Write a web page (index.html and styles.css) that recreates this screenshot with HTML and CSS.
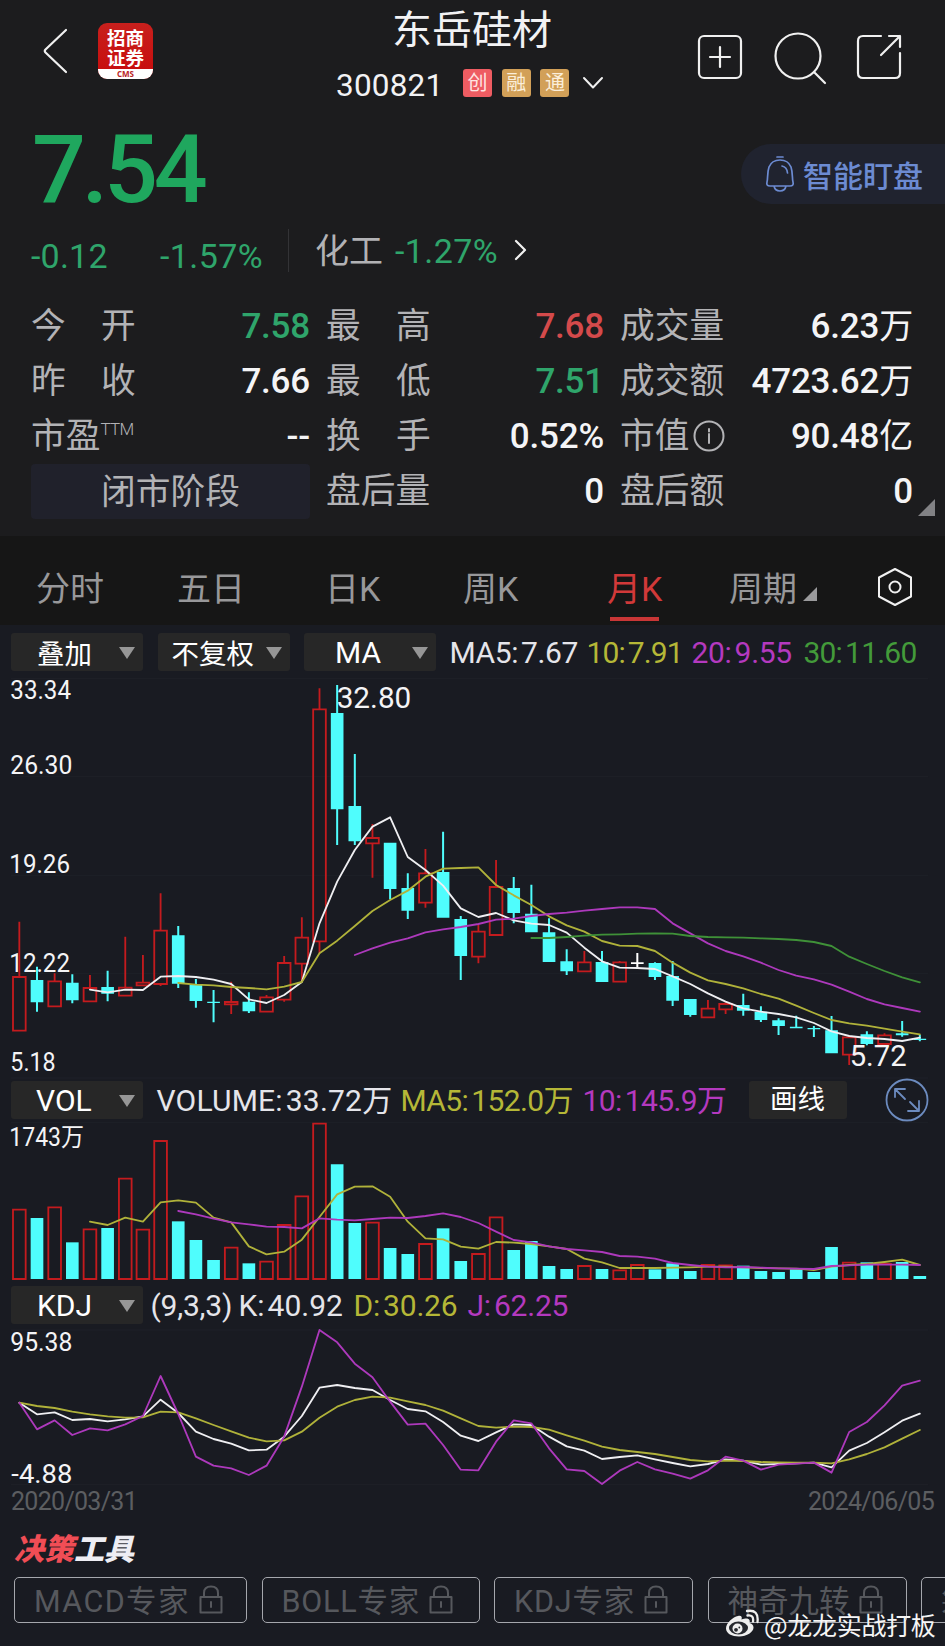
FILE: index.html
```html
<!DOCTYPE html>
<html lang="zh-CN">
<head>
<meta charset="utf-8">
<title>东岳硅材 300821</title>
<link rel="stylesheet" href="styles.css">
</head>
<body>
<main class="app">
  <header class="top">
    <svg class="back" viewBox="0 0 26 48"><path d="M23 3 2.500 22.500Q1 24 2.500 25.500L23 45"/></svg>
    <div class="logo"><div class="logo-name"><span>招商</span><span>证券</span></div><div class="logo-cms">CMS</div></div>
    <div class="title">
      <h1 class="name">东岳硅材</h1>
      <div class="code-row">
        <span class="code">300821</span>
        <span class="badge badge-red">创</span><span class="badge">融</span><span class="badge">通</span>
        <svg class="chev-down" viewBox="0 0 22 14"><path d="M2 2 11 11.500 20 2"/></svg>
      </div>
    </div>
    <div class="actions">
      <svg viewBox="0 0 46 46"><rect x="2" y="2" width="42" height="42" rx="5"/><path d="M23 13v20M13 23h20"/></svg>
      <svg class="search" viewBox="0 0 54 54"><circle cx="25" cy="25" r="22.500"/><path d="M41 41 52 52"/></svg>
      <svg viewBox="0 0 46 46"><path d="M25 2H7Q2 2 2 7V39Q2 44 7 44H39Q44 44 44 39V19M33 2H44V13M44 2 25 21"/></svg>
    </div>
  </header>

  <section class="price-area">
    <div class="price">7.54</div>
    <a class="watch"><svg viewBox="0 0 30 38"><path d="M12 2h6M2 27C3 24 2 18 4 12 6 7 10 5 15 5S24 7 26 12C28 18 27 24 28 27Q29 31 25 31H5Q1 31 2 27ZM9 31Q10 36 15 36T21 31M17 11Q22 12 22.500 18"/></svg><span>智能盯盘</span></a>
  </section>
  <section class="change">
    <span class="delta">-0.12</span><span class="pct">-1.57%</span>
    <i class="divider"></i>
    <span class="sector">化工</span><span class="sector-pct">-1.27%</span>
    <svg class="chev-right" viewBox="0 0 13 22"><path d="M2 2 11 11 2 20"/></svg>
  </section>

  <section class="quotes">
    <div class="q"><span class="wide">今开</span><b class="green">7.58</b></div>
    <div class="q"><span class="wide">最高</span><b class="red">7.68</b></div>
    <div class="q"><span>成交量</span><b>6.23<i>万</i></b></div>
    <div class="q"><span class="wide">昨收</span><b>7.66</b></div>
    <div class="q"><span class="wide">最低</span><b class="green">7.51</b></div>
    <div class="q"><span>成交额</span><b>4723.62<i>万</i></b></div>
    <div class="q"><span>市盈<sup>TTM</sup></span><b>--</b></div>
    <div class="q"><span class="wide">换手</span><b>0.52%</b></div>
    <div class="q"><span>市值</span><svg class="info" viewBox="0 0 32 32"><circle cx="16" cy="16" r="14.500"/><path d="M16 14v9M16 9v2.500"/></svg><b>90.48<i>亿</i></b></div>
    <div class="phase">闭市阶段</div>
    <div class="q"><span>盘后量</span><b>0</b></div>
    <div class="q"><span>盘后额</span><b>0</b><i class="corner"></i></div>
  </section>

  <nav class="tabs">
    <a>分时</a><a>五日</a><a>日K</a><a>周K</a><a class="active">月K</a><a class="period">周期<i></i></a>
    <svg viewBox="0 0 36 40"><path d="M18 2 34 10.500V29.500L18 38 2 29.500V10.500Z"/><circle cx="18" cy="20" r="5.500"/></svg>
  </nav>

  <section class="charts">
    <div class="bar bar-ma">
      <span class="sel sel-cjk">叠加<i></i></span><span class="sel sel-cjk tight">不复权<i></i></span><span class="sel">MA<i></i></span>
      <div class="legend l-ma"><span class="w">MA5:<em>7.67</em></span><span class="y">10:<em>7.91</em></span><span class="p">20:<em>9.55</em></span><span class="g">30:<em>11.60</em></span></div>
    </div>
    <svg class="plot plot-k" id="candles" viewBox="0 165 2835 1215"></svg>
    <div class="bar bar-vol">
      <span class="sel">VOL<i></i></span>
      <div class="legend l-vol"><span class="w">VOLUME:<em>33.72万</em></span><span class="y">MA5:<em>152.0万</em></span><span class="p">10:<em>145.9万</em></span></div>
      <span class="draw">画线</span>
      <svg class="expand" viewBox="0 0 44 44"><circle cx="22" cy="22" r="20.500"/><path d="M10 19V11H20M10 11 20 21M25 24 33 32M23 33H34V23"/></svg>
    </div>
    <svg class="plot plot-s" id="volume" viewBox="0 150 2835 486"></svg>
    <div class="bar bar-kdj">
      <span class="sel">KDJ<i></i></span>
      <div class="legend l-kdj"><span class="w">(9,3,3)</span><span class="w">K:<em>40.92</em></span><span class="y">D:<em>30.26</em></span><span class="p">J:<em>62.25</em></span></div>
    </div>
    <svg class="plot plot-s" id="kdj" viewBox="0 108 2835 486"></svg>
    <div class="dates"><span>2020/03/31</span><span>2024/06/05</span></div>
  </section>

  <section class="tools">
    <h2><span>决策</span>工具</h2>
    <div class="tool-row">
      <a class="t1"><span>MACD专家</span><svg viewBox="0 0 24 29"><path d="M1.500 12H22.500V27.500H1.500ZM5 12V8Q5 1.500 12 1.500T19 8V12M12 17v5"/></svg></a>
      <a class="t2"><span>BOLL专家</span><svg viewBox="0 0 24 29"><path d="M1.500 12H22.500V27.500H1.500ZM5 12V8Q5 1.500 12 1.500T19 8V12M12 17v5"/></svg></a>
      <a class="t3"><span>KDJ专家</span><svg viewBox="0 0 24 29"><path d="M1.500 12H22.500V27.500H1.500ZM5 12V8Q5 1.500 12 1.500T19 8V12M12 17v5"/></svg></a>
      <a class="t4"><span>神奇九转</span><svg viewBox="0 0 24 29"><path d="M1.500 12H22.500V27.500H1.500ZM5 12V8Q5 1.500 12 1.500T19 8V12M12 17v5"/></svg></a>
      <a class="t5"><span>筹</span></a>
    </div>
  </section>

  <div class="watermark">
    <svg viewBox="0 0 34 28"><path class="fill" d="M13 7C8 8 1 14 1 19.500 1 24.500 7 27.500 14 27.500 22 27.500 28.500 23 28.500 18.500 28.500 16 26.500 14.500 24.500 14 25.500 11 24 8 16.500 10.500 17.500 7.500 16 6.300 13 7Z"/><ellipse class="hole" cx="13.500" cy="19" rx="9.500" ry="6.500"/><circle class="fill" cx="12.500" cy="19.500" r="5"/><circle class="hole" cx="11" cy="20.800" r="1.900"/><circle class="hole" cx="14.300" cy="18.500" r=".9"/><path class="line" d="M22.500 6.500Q29 5.500 28 12.500M22 2Q34 0 32.500 13"/></svg>
    <span>@龙龙实战打板</span>
  </div>
</main>
<script src="charts.js"></script>
</body>
</html>
```
FILE: styles.css
```css
* { box-sizing: border-box; }
body { margin: 0; background: #191b22; font-family: Roboto, "Noto Sans CJK SC", sans-serif; color: #f2f2f4; }
i, em { font-style: normal; }
h1, h2 { margin: 0; font-weight: 400; }
svg { display: block; fill: none; stroke: #f0f0f0; stroke-linecap: round; stroke-linejoin: round; flex: none; }
.app { position: relative; width: 945px; height: 1646px; overflow: hidden; background: #1c1c1e; }

.top { display: flex; height: 118px; padding-left: 43px; }
.back { width: 26px; height: 48px; margin-top: 27px; stroke-width: 2.2; }
.logo { width: 55px; height: 56px; margin: 23px 0 0 29px; border-radius: 9px; background: linear-gradient(#c8201d, #c70b0b); overflow: hidden; text-align: center; }
.logo-name { display: flex; flex-direction: column; height: 46px; padding-top: 4px; font: 700 18.500px/20px "Noto Sans CJK SC", sans-serif; color: #fff; }
.logo-cms { height: 10px; background: #fff; color: #b92326; font: 700 8px/9px "Open Sans", sans-serif; }
.title { width: 300px; margin-left: 169px; }
.name { margin-top: 2px; padding-left: 70px; font-size: 40px; line-height: 57px; white-space: nowrap; }
.code-row { display: flex; align-items: center; height: 30px; margin-top: 9px; padding-left: 14px; }
.code { width: 127px; font-size: 31.5px; letter-spacing: .2px; padding-top: 5px; }
.badge { width: 29px; height: 28px; margin-right: 9.700px; border-radius: 3px; background: #d2a058; color: #fbeed9; font-size: 20px; line-height: 29px; text-align: center; }
.badge-red { background: #ee5c62; color: #ffe4e2; }
.chev-down { width: 22px; height: 14px; margin-left: 3px; stroke-width: 2; }
.actions { display: flex; align-items: flex-start; margin: 34px 0 0 75px; }
.actions svg { width: 46px; height: 46px; stroke-width: 2.200; }
.actions .search { width: 54px; height: 54px; margin: -3px 29px 0 30px; }

.price-area { display: flex; justify-content: space-between; height: 104px; padding-left: 32px; }
.price { padding-top: 2px; font-size: 95px; line-height: 100px; font-weight: 500; letter-spacing: -4.200px; color: #1fa75e; }
.watch { display: flex; align-items: center; width: 204px; height: 60px; margin-top: 26px; padding-left: 24px; border-radius: 30px 0 0 30px; background: #20232f; color: #6c8bd2; font-size: 30px; font-weight: 500; }
.watch svg { width: 30px; height: 38px; margin-right: 8px; stroke: #6c8bd2; stroke-width: 1.700; }

.change { display: flex; align-items: center; height: 56px; padding-left: 31px; font-size: 34px; line-height: 44px; color: #2fa56b; }
.delta { width: 129px; padding-top: 11px; letter-spacing: .2px; }
.pct { width: 128px; padding-top: 11px; letter-spacing: .4px; }
.divider { width: 1px; height: 43px; background: #333336; }
.sector { width: 105px; padding-left: 26px; color: #b2b2b5; font-size: 34px; padding-top: 2px; }
.sector-pct { width: 120px; padding-left: 1px; padding-top: 2px; letter-spacing: .4px; }
.chev-right { width: 13px; height: 22px; stroke-width: 2.200; }

.quotes { display: grid; grid-template-columns: 279px 278px 293px; column-gap: 16px; grid-auto-rows: 55.200px; height: 258px; padding: 20px 0 0 31px; font-size: 34.700px; color: #b3b3b6; }
.q { position: relative; display: flex; align-items: center; line-height: 50px; white-space: nowrap; }
.q .wide { letter-spacing: 35.300px; margin-right: -35px; }
.q b { margin-left: auto; padding-top: 2px; font-size: 35px; font-weight: 500; letter-spacing: -.2px; color: #f4f4f6; }
.q b i { font-size: 34px; font-weight: 400; }
.q .green { color: #2fa56b; }
.q .red { color: #d44a4b; }
.q sup { font-size: 17px; line-height: 10px; vertical-align: 13px; font-weight: 300; letter-spacing: -.7px; }
.info { width: 32px; height: 32px; margin-left: 4px; stroke: #b3b3b6; stroke-width: 2; }
.phase { height: 55px; border-radius: 4px; background: #20212b; text-align: center; line-height: 57px; }
.corner { position: absolute; right: -22px; top: 35px; border-left: 17px solid transparent; border-bottom: 17px solid #828285; }

.tabs { display: flex; align-items: center; height: 89px; padding: 16px 0 0 36px; background: #161616; color: #98989a; font-size: 34px; line-height: 60px; }
.tabs a { width: 144px; white-space: nowrap; }
.tabs a:first-child { width: 141px; }
.tabs a:nth-child(2) { width: 148px; }
.tabs a:nth-child(3) { width: 138px; }
.tabs a:nth-child(4) { width: 144px; }
.tabs a.active { position: relative; width: 122px; color: #d13939; }
.active::after { content: ""; position: absolute; left: 3px; bottom: -2px; width: 49px; height: 4px; background: #c93636; }
.tabs a.period { width: 148px; }
.period i { display: inline-block; margin-left: 6px; border-left: 14px solid transparent; border-bottom: 14px solid #9a9a9c; }
.tabs svg { width: 36px; height: 40px; stroke-width: 2; margin-top: -4px; }

.charts { height: 891px; background: #191b22; padding-top: 7px; }
.bar { display: flex; align-items: center; height: 39px; padding-left: 11px; }
.sel { display: flex; align-items: center; position: relative; width: 132px; height: 38px; margin-right: 14.500px; padding: 2px 0 0 25px; border-radius: 3px; background: #272727; color: #fff; font-size: 30px; }
.sel-cjk { font-size: 27.500px; padding-top: 0; padding-left: 26px; }
.tight { padding-left: 14px; }
.sel:nth-child(3) { padding-left: 31px; }
.sel i { position: absolute; right: 8px; top: 14px; border: 8px solid transparent; border-top: 12px solid #969696; border-bottom: 0; }
.legend { display: flex; font-size: 30px; line-height: 40px; padding-top: 3px; white-space: nowrap; }
.legend em { margin-left: 3px; }
.w { color: #e5e5ea; } .y { color: #b5b737; } .p { color: #b439bf; } .g { color: #439a3a; }
.l-ma { letter-spacing: -.8px; margin-left: -1px; }
.l-ma span:nth-child(1) { width: 137px; letter-spacing: -.4px; }
.l-ma span:nth-child(2) { width: 105px; letter-spacing: -.9px; }
.l-ma span:nth-child(3) { width: 112px; letter-spacing: -.3px; }
.l-vol span:nth-child(1) { width: 244px; letter-spacing: .2px; }
.l-vol span:nth-child(2) { width: 182px; letter-spacing: -.6px; }
.l-vol span:nth-child(3) { width: 166px; letter-spacing: -.6px; }
.l-kdj { margin-left: -7px; letter-spacing: -.2px; }
.l-kdj span:nth-child(1) { width: 88px; }
.l-kdj span:nth-child(2) { width: 115px; letter-spacing: 0; }
.l-kdj span:nth-child(3) { width: 114px; }
.bar-ma { margin-bottom: 4px; }
.bar-vol { margin-bottom: 1px; }
.bar-vol .legend { margin-left: -1px; }
.bar-kdj { margin: 3px 0 2px; }
.bar-kdj .sel { padding-left: 26px; }
.draw { width: 98px; height: 38px; border-radius: 3px; background: #272727; color: #fff; font-size: 27.500px; line-height: 38px; text-align: center; }
.expand { width: 44px; height: 44px; margin-left: 38px; stroke: #6c8bbf; stroke-width: 1.800; }
.plot { width: 945px; }
.plot-k { height: 405px; }
.plot-s { height: 162px; }
.plot text { fill: #f4f4f6; stroke: none; font-size: 75px; }
.plot .peak { font-size: 89px; }
.grid { stroke: #1e2128; stroke-width: 3; }
.up { stroke: #c41b1e; stroke-width: 5.500; stroke-linejoin: miter; stroke-linecap: butt; }
.down { fill: #4ffdfd; stroke: none; }
.flat { fill: #fff; stroke: none; }
.series { stroke-width: 5.500; }
.s-white { stroke: #efeff2; } .s-yellow { stroke: #b0b23a; } .s-purple { stroke: #ad39bc; } .s-green { stroke: #3f9138; }
.dates { display: flex; justify-content: space-between; padding: 0 11px 0 11px; color: #5c5e61; font-size: 25px; line-height: 27px; letter-spacing: -.7px; }

.tools { height: 130px; padding: 12px 0 0 14px; background: #191b22; }
.tools h2 { height: 49px; font: italic 900 30px/38px "Noto Sans CJK SC", sans-serif; color: #eeeef4; }
.tools h2 span { color: #f04d55; }
.tool-row { display: flex; gap: 14.500px; }
.tool-row a { display: flex; align-items: center; flex: none; height: 46px; padding-left: 19px; border: 1.500px solid #a5a7ad; border-radius: 5px; color: #56585d; font-size: 30.500px; line-height: 42px; letter-spacing: .8px; white-space: nowrap; }
.tool-row a span { padding-top: 3px; }
.tool-row svg { width: 24px; height: 29px; margin: -2px 0 0 9px; stroke: #56585d; stroke-width: 2; }
.t1 { width: 233px; } .t2 { width: 218px; } .t3 { width: 199px; } .t4 { width: 199px; } .t5 { width: 199px; }
.tool-row .t1 { letter-spacing: 1.400px; }
.tool-row .t4 { letter-spacing: 0; }
.watermark { position: absolute; left: 725px; top: 1605px; display: flex; align-items: center; color: #f5f5f5; font: 25px/38px "Noto Sans CJK SC", sans-serif; letter-spacing: -.3px; white-space: nowrap; }
.watermark svg { width: 34px; height: 28px; margin: 0 5px 2px 0; }
.watermark .fill { fill: #eee; stroke: none; }
.watermark .hole { fill: #25272d; stroke: none; }
.watermark .line { stroke: #eee; stroke-width: 2.300; }
```
FILE: charts.js
```js
// Plot units are thirds of a CSS pixel; each month takes one step along x.
const X0 = 58, STEP = 52.97, HALF = 19;
const x = i => X0 + STEP * i;

// r = rising (hollow), c = falling (filled), w = unchanged: high, body top, body bottom, low
const candles = `r 905 1071 1232 1232|c 1040 1080 1147 1175|r 1060 1084 1159 1159|c 1063 1088 1141 1150|r 1065 1104 1144 1144|c 1052 1101 1121 1144|r 950 1103 1127 1127|r 1005 1088 1096 1097|r 820 932 1092 1098|c 918 946 1091 1104|c 1077 1095 1143 1163|c 1110 1145 1149 1207|r 1085 1146 1153 1182|c 1117 1145 1174 1179|r 1125 1132 1175 1175|r 1008 1029 1139 1145|r 892 953 1031 1085|r 205 268 964 1000|c 195 279 568 675|c 402 558 664 675|r 612 654 670 773|c 668 668 807 838|c 760 804 872 897|r 687 760 848 863|c 635 756 893 893|c 888 897 1008 1080|r 915 935 1010 1030|r 720 801 945 948|c 771 804 879 910|c 794 881 937 937|c 895 937 1026 1026|c 988 1024 1054 1065|r 993 1027 1054 1054|c 993 1026 1086 1086|r 1023 1027 1085 1085|w 999 1027 1032 1046|c 1027 1029 1071 1080|c 1023 1068 1142 1158|c 1137 1137 1185 1190|r 1140 1166 1192 1192|r 1147 1152 1168 1182|c 1121 1155 1172 1187|c 1159 1175 1200 1206|c 1195 1201 1218 1245|c 1187 1220 1225 1225|c 1218 1224 1228 1251|c 1188 1231 1300 1300|r 1245 1252 1304 1335|c 1234 1243 1272 1276|r 1240 1246 1272 1272|c 1203 1240 1246 1250|c 1244 1256 1260 1264`
  .split('|').map(s => { const [t, ...v] = s.split(' '); return [t, ...v.map(Number)]; });

const ma5 = [1109,1117,1109,1110,1070,1068,1071,1079,1092,1138,1149,1125,1086,910,785,690,620,592,711,750,797,865,891,879,901,911,915,938,983,1024,1043,1044,1047,1069,1092,1120,1145,1165,1175,1182,1192,1209,1234,1248,1254,1257,1263,1253];
const ma10 = [1089,1094,1096,1101,1104,1108,1100,1086,1000,962,918,873,840,812,770,746,744,742,795,826,855,889,916,935,963,977,978,993,1028,1058,1081,1092,1105,1122,1136,1157,1179,1200,1210,1217,1226,1235,1243];
const ma20 = [1005,985,968,955,937,928,921,912,899,896,888,882,878,872,867,862,862,867,910,940,970,993,1009,1028,1050,1067,1078,1094,1115,1137,1153,1164,1175];
const ma30 = [954,954,951,947,944,943,941,940,941,948,951,952,953,955,957,960,966,978,1010,1032,1053,1072,1087];

const volumes = [419,444,412,517,478,474,326,479,213,454,510,570,533,580,575,465,379,161,283,459,458,534,552,522,475,573,552,442,540,513,588,597,588,597,601,585,598,580,603,585,586,587,603,606,598,606,531,578,577,582,576,618];
const vma5 = [455,465,443,455,397,391,398,443,457,529,553,545,509,441,373,350,349,380,455,505,508,530,536,516,518,522,529,537,566,577,594,594,594,593,592,590,590,592,594,595,596,600,590,585,582,576,569,585];
const vma10 = [423,433,446,457,463,470,471,475,445,449,451,447,443,444,438,430,441,459,485,510,517,529,537,541,546,558,560,566,579,585,590,592,591,593,595,596,597,588,586,584,584,584,585];

const k = [338,373,367,390,387,394,388,379,329,369,425,447,461,481,479,440,378,293,285,294,300,330,357,364,396,437,453,427,403,405,440,469,482,507,501,496,508,519,529,522,508,512,524,522,520,518,532,482,459,427,392,371];
const d = [338,348,354,365,373,379,383,382,365,367,385,405,424,443,454,451,425,383,350,330,320,323,334,345,362,385,408,413,410,411,419,436,452,470,480,486,492,501,510,514,512,513,516,517,518,518,520,508,492,472,446,420];
const j = [338,418,391,435,415,421,403,378,258,372,500,527,535,555,527,440,290,120,157,221,262,335,404,401,465,539,541,455,391,400,475,538,543,582,542,516,538,551,566,541,500,512,539,524,521,518,548,426,396,346,287,272];

// Series are aligned to the latest month, so short ones start later.
const line = (v, name) => `<polyline class="series s-${name}" points="${v.map((y, n) => `${x(n + 52 - v.length).toFixed(1)},${y}`).join(' ')}"/>`;
const label = (s, lx, ly, w, cls = '') => `<text class="${cls}" x="${lx}" y="${ly}" textLength="${w}" lengthAdjust="spacingAndGlyphs">${s}</text>`;
const rule = y => `<path class="grid" d="M34 ${y}H2783"/>`;

function candle([t, hi, top, bot, lo], i) {
  const c = x(i);
  if (t === 'r') {
    return `<path class="up" d="M${c} ${hi}V${top}M${c} ${bot}V${lo}M${c - HALF} ${top}H${c + HALF}V${bot}H${c - HALF}Z"/>`;
  }
  const cls = t === 'w' ? 'flat' : 'down';
  return `<path class="${cls}" d="M${c - HALF} ${top}H${c + HALF}V${bot}H${c - HALF}ZM${c - 3} ${hi}H${c + 3}V${lo}H${c - 3}Z"/>`;
}

function volume(top, i) {
  const c = x(i);
  const rising = candles[i][0] !== 'c';
  return `<path class="${rising ? 'up' : 'down'}" d="M${c - HALF} ${top}H${c + HALF}V627H${c - HALF}Z"/>`;
}

document.getElementById('candles').innerHTML =
  [176, 470, 766, 1060, 1374].map(rule).join('') +
  label('33.34', 31, 236, 182) + label('26.30', 31, 463, 186) + label('19.26', 28, 760, 182) + label('12.22', 28, 1057, 182) + label('5.18', 31, 1353, 136) +
  candles.map(candle).join('') +
  line(ma5, 'white') + line(ma10, 'yellow') + line(ma20, 'purple') + line(ma30, 'green') +
  label('32.80', 1010, 264, 224, 'peak') + label('5.72', 2549, 1338, 171, 'peak');

document.getElementById('volume').innerHTML =
  rule(157) + label('1743万', 28, 227, 224) + volumes.map(volume).join('') + line(vma5, 'yellow') + line(vma10, 'purple');

document.getElementById('kdj').innerHTML =
  rule(120) + rule(584) + label('95.38', 31, 183, 186) + label('-4.88', 34, 580, 183) +
  line(k, 'white') + line(d, 'yellow') + line(j, 'purple');
```
